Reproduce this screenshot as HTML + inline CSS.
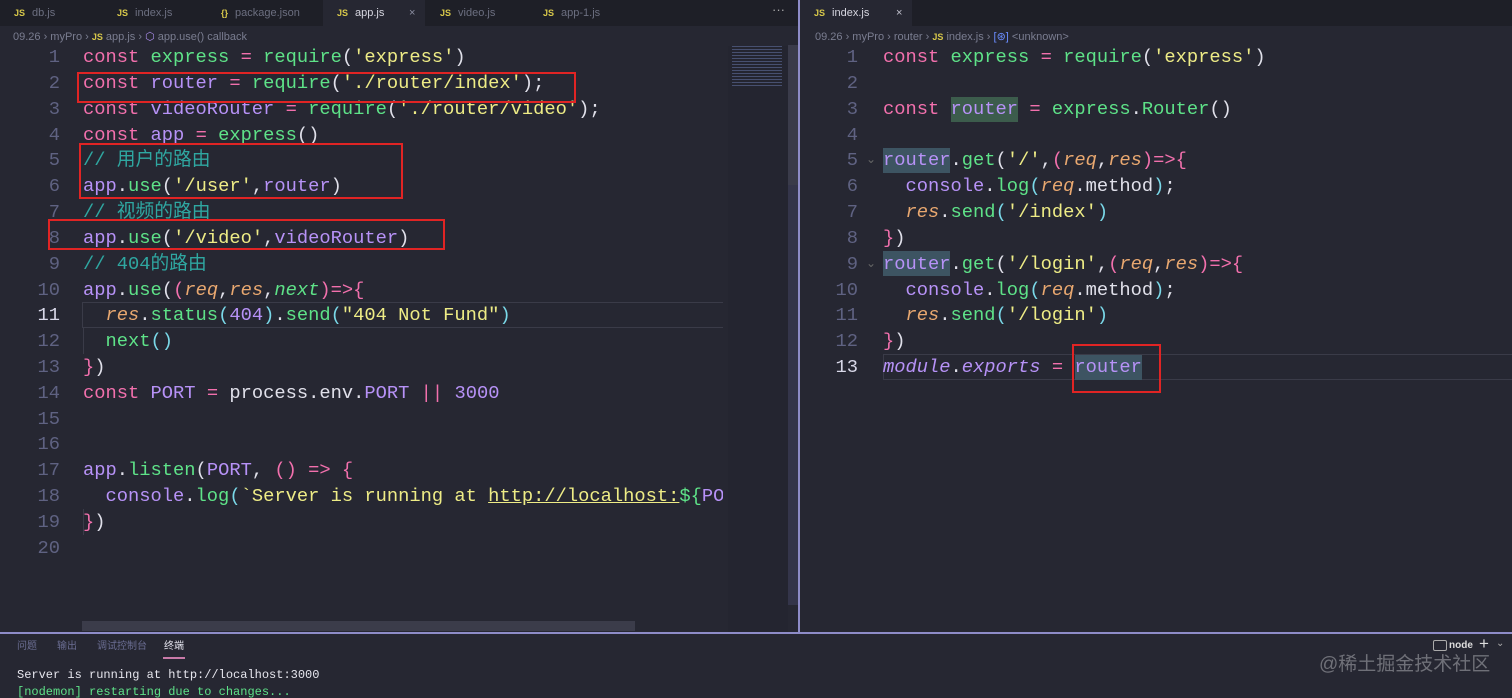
<!DOCTYPE html>
<html style="width:1512px;height:698px;overflow:hidden"><head><meta charset="utf-8"><style>
*{margin:0;padding:0;box-sizing:border-box}
body{width:1512px;height:698px;background:#262732;overflow:hidden;position:relative;font-family:"Liberation Sans","Noto Sans CJK SC",sans-serif}
.abs{position:absolute}
.tabs{top:0;height:26px;background:#1e1f27}
.tab{position:absolute;top:0;height:26px;font-size:11px;color:#6c6f80;line-height:26px;padding-left:14px;white-space:nowrap}
.tab b{color:#d8c84a;font-size:9px;margin-right:7px;font-weight:bold}
.tab.act{background:#262732;color:#d6d6e0}
.bc{top:28px;font-size:11px;color:#7a7d90;line-height:18px;white-space:nowrap}
.bc b{color:#d8c84a;font-size:9px;font-weight:bold}
.code{font-family:"Liberation Mono","Noto Sans CJK SC",monospace;font-size:18.75px;line-height:26px;white-space:pre}
.ln{position:absolute;width:60px;text-align:right;color:#5f6282}
.ln.c{color:#d8d8e8}
.l{position:absolute}
.k{color:#f270ad}.v{color:#b792f7}.f{color:#5ee288}.s{color:#eeec86}.p{color:#e0e0ea}.c{color:#2fa7a1}.pa{color:#e9a870;font-style:italic}.n{color:#b792f7}.br{color:#f270ad}.it{color:#b792f7;font-style:italic}.cy{color:#7ad8e8}
.red{position:absolute;border:2px solid #e02424}
</style></head><body>
<div class="abs tabs" style="left:0;width:798px"></div>
<div class="abs tabs" style="left:800px;width:712px"></div>
<div class="tab" style="left:0;width:100px"><b>JS</b>db.js</div>
<div class="tab" style="left:103px;width:103px"><b>JS</b>index.js</div>
<div class="tab" style="left:207px;width:115px"><b>{}</b>package.json</div>
<div class="tab act" style="left:323px;width:102px"><b>JS</b>app.js<span style="position:absolute;left:86px;color:#8a8da0">×</span></div>
<div class="tab" style="left:426px;width:102px"><b>JS</b>video.js</div>
<div class="tab" style="left:529px;width:100px"><b>JS</b>app-1.js</div>
<div class="abs" style="left:772px;top:2px;color:#aaa;font-size:13px">···</div>
<div class="tab act" style="left:800px;width:112px"><b>JS</b>index.js<span style="position:absolute;left:96px;color:#c0c0cc">×</span></div>
<div class="abs bc" style="left:13px">09.26 › myPro › <b>JS</b> app.js › <span style="color:#a88be8">⬡</span> app.use() callback</div>
<div class="abs bc" style="left:815px">09.26 › myPro › router › <b>JS</b> index.js › <span style="color:#6a8cff">[⊛]</span> &lt;unknown&gt;</div>

<div class="abs" style="left:798px;top:0;width:2px;height:632px;background:#8e8cc8"></div>
<div class="abs" style="left:728px;top:46px;width:60px;height:586px;background:#242530"></div>
<div class="abs" style="left:732px;top:46px;width:50px;height:40px;opacity:.5;background:repeating-linear-gradient(#6a7bb0 0 1px,transparent 1px 3px)"></div>
<div class="abs" style="left:788px;top:45px;width:10px;height:318px;background:#3a3b4a"></div>
<div class="abs" style="left:788px;top:185px;width:10px;height:420px;background:#34354a"></div>
<div class="abs" style="left:82px;top:621px;width:553px;height:10px;background:#3b3c4a"></div>

<div class="code">
<div class="abs" style="left:82px;top:302px;width:641px;height:26px;border:1px solid #3a3b48;border-right:none"></div>
<div class="abs" style="left:83px;top:328px;width:1px;height:26px;background:#3a3b48"></div>
<div class="abs" style="left:83px;top:509px;width:1px;height:26px;background:#3a3b48"></div>
<div class="ln" style="top:44px">1</div><div class="l" style="left:83px;top:44px"><span class="k">const</span> <span class="f">express</span> <span class="br">=</span> <span class="f">require</span><span class="p">(</span><span class="s">'express'</span><span class="p">)</span></div>
<div class="ln" style="top:70px">2</div><div class="l" style="left:83px;top:70px"><span class="k">const</span> <span class="v">router</span> <span class="br">=</span> <span class="f">require</span><span class="p">(</span><span class="s">'./router/index'</span><span class="p">);</span></div>
<div class="ln" style="top:96px">3</div><div class="l" style="left:83px;top:96px"><span class="k">const</span> <span class="v">videoRouter</span> <span class="br">=</span> <span class="f">require</span><span class="p">(</span><span class="s">'./router/video'</span><span class="p">);</span></div>
<div class="ln" style="top:122px">4</div><div class="l" style="left:83px;top:122px"><span class="k">const</span> <span class="v">app</span> <span class="br">=</span> <span class="f">express</span><span class="p">()</span></div>
<div class="ln" style="top:147px">5</div><div class="l" style="left:83px;top:147px"><span class="c">// 用户的路由</span></div>
<div class="ln" style="top:173px">6</div><div class="l" style="left:83px;top:173px"><span class="v">app</span><span class="p">.</span><span class="f">use</span><span class="p">(</span><span class="s">'/user'</span><span class="p">,</span><span class="v">router</span><span class="p">)</span></div>
<div class="ln" style="top:199px">7</div><div class="l" style="left:83px;top:199px"><span class="c">// 视频的路由</span></div>
<div class="ln" style="top:225px">8</div><div class="l" style="left:83px;top:225px"><span class="v">app</span><span class="p">.</span><span class="f">use</span><span class="p">(</span><span class="s">'/video'</span><span class="p">,</span><span class="v">videoRouter</span><span class="p">)</span></div>
<div class="ln" style="top:251px">9</div><div class="l" style="left:83px;top:251px"><span class="c">// 404的路由</span></div>
<div class="ln" style="top:277px">10</div><div class="l" style="left:83px;top:277px"><span class="v">app</span><span class="p">.</span><span class="f">use</span><span class="p">(</span><span class="br">(</span><span class="pa">req</span><span class="p">,</span><span class="pa">res</span><span class="p">,</span><span class="pa" style="color:#5ee288">next</span><span class="br">)=&gt;{</span></div>
<div class="ln c" style="top:302px">11</div><div class="l" style="left:83px;top:302px">  <span class="pa">res</span><span class="p">.</span><span class="f">status</span><span class="cy">(</span><span class="n">404</span><span class="cy">)</span><span class="p">.</span><span class="f">send</span><span class="cy">(</span><span class="s">"404 Not Fund"</span><span class="cy">)</span></div>
<div class="ln" style="top:328px">12</div><div class="l" style="left:83px;top:328px">  <span class="f">next</span><span class="cy">()</span></div>
<div class="ln" style="top:354px">13</div><div class="l" style="left:83px;top:354px"><span class="br">}</span><span class="p">)</span></div>
<div class="ln" style="top:380px">14</div><div class="l" style="left:83px;top:380px"><span class="k">const</span> <span class="v">PORT</span> <span class="br">=</span> <span class="p">process.env.</span><span class="v">PORT</span> <span class="br">||</span> <span class="n">3000</span></div>
<div class="ln" style="top:406px">15</div>
<div class="ln" style="top:431px">16</div>
<div class="ln" style="top:457px">17</div><div class="l" style="left:83px;top:457px"><span class="v">app</span><span class="p">.</span><span class="f">listen</span><span class="p">(</span><span class="v">PORT</span><span class="p">,</span> <span class="br">() =&gt; {</span></div>
<div class="ln" style="top:483px">18</div><div class="l" style="left:83px;top:483px">  <span class="v">console</span><span class="p">.</span><span class="f">log</span><span class="cy">(</span><span class="s">`Server is running at <u>http://localhost:</u></span><span class="f">${</span><span class="v">PO</span></div>
<div class="ln" style="top:509px">19</div><div class="l" style="left:83px;top:509px"><span class="br">}</span><span class="p">)</span></div>
<div class="ln" style="top:535px">20</div>
</div>
<div class="abs" style="left:723px;top:290px;width:5px;height:250px;background:#262732"></div>

<div class="code">
<div class="abs" style="left:883px;top:354px;width:629px;height:26px;border:1px solid #3a3b48;border-right:none"></div>
<div class="abs" style="left:951px;top:97px;width:67px;height:25px;background:#3c5c4c"></div>
<div class="abs" style="left:883px;top:148px;width:67px;height:25px;background:#3d5462"></div>
<div class="abs" style="left:883px;top:251px;width:67px;height:25px;background:#3d5462"></div>
<div class="abs" style="left:1075px;top:355px;width:67px;height:25px;background:#3d5462"></div>
<div class="ln" style="left:798px;top:44px">1</div><div class="l" style="left:883px;top:44px"><span class="k">const</span> <span class="f">express</span> <span class="br">=</span> <span class="f">require</span><span class="p">(</span><span class="s">'express'</span><span class="p">)</span></div>
<div class="ln" style="left:798px;top:70px">2</div>
<div class="ln" style="left:798px;top:96px">3</div><div class="l" style="left:883px;top:96px"><span class="k">const</span> <span class="v">router</span> <span class="br">=</span> <span class="f">express</span><span class="p">.</span><span class="f">Router</span><span class="p">()</span></div>
<div class="ln" style="left:798px;top:122px">4</div>
<div class="ln" style="left:798px;top:147px">5</div><div class="l" style="left:866px;top:147px;font-size:12px;color:#666">⌄</div><div class="l" style="left:883px;top:147px"><span class="v">router</span><span class="p">.</span><span class="f">get</span><span class="p">(</span><span class="s">'/'</span><span class="p">,</span><span class="br">(</span><span class="pa">req</span><span class="p">,</span><span class="pa">res</span><span class="br">)=&gt;{</span></div>
<div class="ln" style="left:798px;top:173px">6</div><div class="l" style="left:883px;top:173px">  <span class="v">console</span><span class="p">.</span><span class="f">log</span><span class="cy">(</span><span class="pa">req</span><span class="p">.method</span><span class="cy">)</span><span class="p">;</span></div>
<div class="ln" style="left:798px;top:199px">7</div><div class="l" style="left:883px;top:199px">  <span class="pa">res</span><span class="p">.</span><span class="f">send</span><span class="cy">(</span><span class="s">'/index'</span><span class="cy">)</span></div>
<div class="ln" style="left:798px;top:225px">8</div><div class="l" style="left:883px;top:225px"><span class="br">}</span><span class="p">)</span></div>
<div class="ln" style="left:798px;top:251px">9</div><div class="l" style="left:866px;top:251px;font-size:12px;color:#666">⌄</div><div class="l" style="left:883px;top:251px"><span class="v">router</span><span class="p">.</span><span class="f">get</span><span class="p">(</span><span class="s">'/login'</span><span class="p">,</span><span class="br">(</span><span class="pa">req</span><span class="p">,</span><span class="pa">res</span><span class="br">)=&gt;{</span></div>
<div class="ln" style="left:798px;top:277px">10</div><div class="l" style="left:883px;top:277px">  <span class="v">console</span><span class="p">.</span><span class="f">log</span><span class="cy">(</span><span class="pa">req</span><span class="p">.method</span><span class="cy">)</span><span class="p">;</span></div>
<div class="ln" style="left:798px;top:302px">11</div><div class="l" style="left:883px;top:302px">  <span class="pa">res</span><span class="p">.</span><span class="f">send</span><span class="cy">(</span><span class="s">'/login'</span><span class="cy">)</span></div>
<div class="ln" style="left:798px;top:328px">12</div><div class="l" style="left:883px;top:328px"><span class="br">}</span><span class="p">)</span></div>
<div class="ln c" style="left:798px;top:354px">13</div><div class="l" style="left:883px;top:354px"><span class="it">module</span><span class="p">.</span><span class="it">exports</span> <span class="br">=</span> <span class="v">router</span></div>
</div>

<div class="red" style="left:77px;top:72px;width:499px;height:31px"></div>
<div class="red" style="left:79px;top:143px;width:324px;height:56px"></div>
<div class="red" style="left:48px;top:219px;width:397px;height:31px"></div>
<div class="red" style="left:1072px;top:344px;width:89px;height:49px"></div>

<div class="abs" style="left:0;top:632px;width:1512px;height:2px;background:#8e8cc8"></div>
<div class="abs" style="left:0;top:634px;width:1512px;height:64px;background:#262732;overflow:hidden">
<div class="abs" style="top:6px;left:17px;font-size:10px;color:#6a6d92;line-height:14px">问题</div>
<div class="abs" style="top:6px;left:57px;font-size:10px;color:#6a6d92;line-height:14px">输出</div>
<div class="abs" style="top:6px;left:97px;font-size:10px;color:#6a6d92;line-height:14px;white-space:nowrap">调试控制台</div>
<div class="abs" style="top:6px;left:164px;font-size:10px;color:#e0e0ea;line-height:14px">终端</div>
<div class="abs" style="top:23px;left:163px;width:22px;height:2px;background:#c87aa8"></div>
<div class="abs" style="top:6px;left:1433px;width:14px;height:11px;border:1px solid #aaa;border-radius:2px"></div>
<div class="abs" style="top:6px;left:1449px;font-size:10px;color:#ddd;font-weight:bold;line-height:12px">node</div>
<div class="abs" style="top:0;left:1479px;font-size:17px;color:#ddd;line-height:20px">+</div>
<div class="abs" style="top:4px;left:1496px;font-size:10px;color:#aaa">⌄</div>
<div class="abs" style="top:19px;left:1319px;font-size:19px;color:#6f7078;line-height:24px;white-space:nowrap">@稀土掘金技术社区</div>
<div class="abs" style="top:33px;left:17px;font-family:'Liberation Mono',monospace;font-size:12px;color:#e6e6ee;line-height:17px;white-space:pre">Server is running at http://localhost:3000
<span style="color:#5ee288">[nodemon] restarting due to changes...</span></div>
</div>
</body></html>
